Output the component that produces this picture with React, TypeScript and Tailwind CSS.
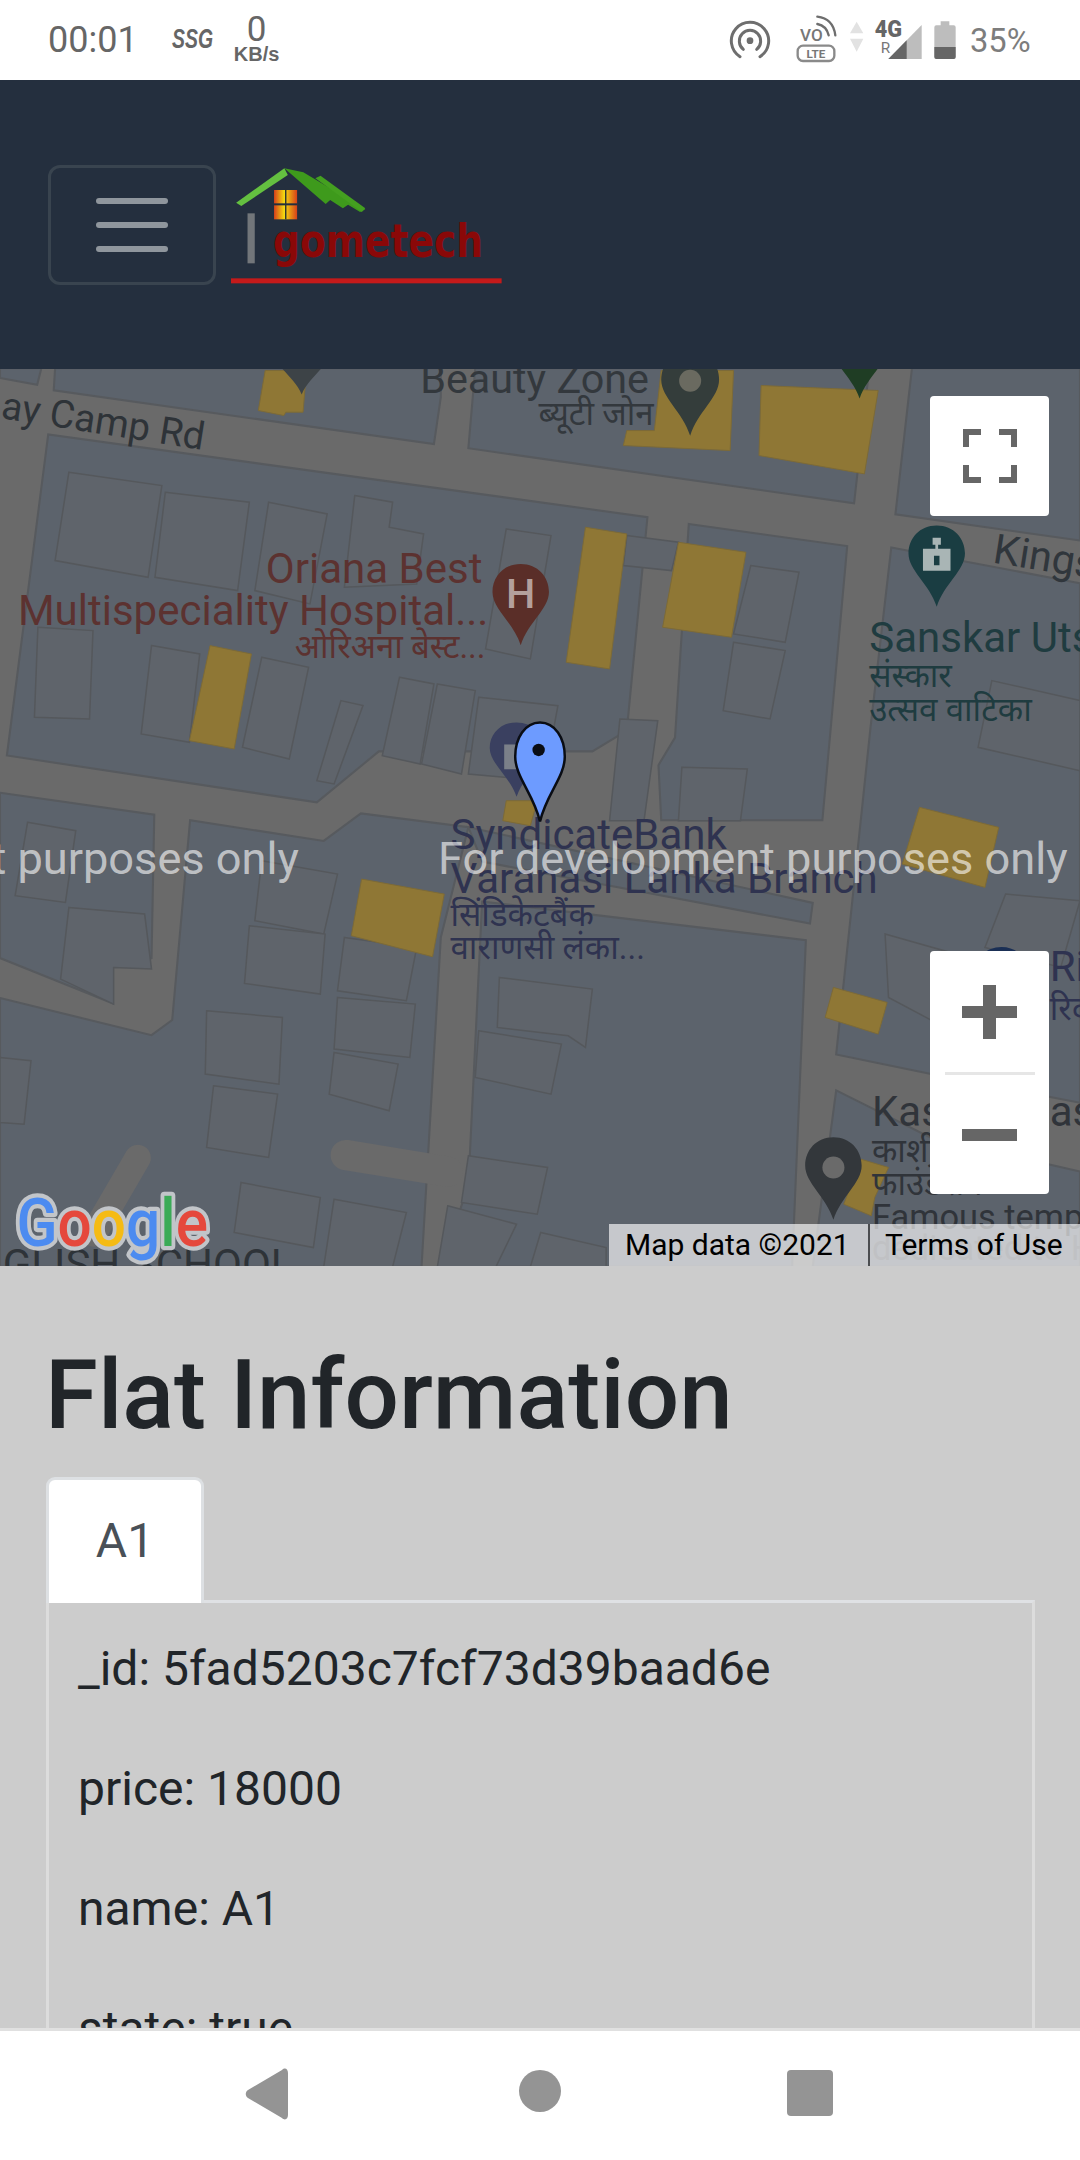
import React from 'react';

const FONT = { fontFamily: 'Roboto, "Noto Sans", sans-serif' };

// block outlines in the coordinates of the 784 wide picture
const blocks = [
  '40,267 39,283 315,322 320,288 320,267',
  '345,267 340,325 620,365 631,267',
  '662,267 650,373 784,392 784,267',
  '0,267 30,267 27,279 0,274',
  '35,315 5,548 230,582 275,545 430,545 455,530 470,375',
  '500,380 615,396 597,595 480,595 478,555 490,535',
  '647,397 784,423 784,800 675,779 607,765 632,527',
  '0,575 112,591 110,695 82,700 82,728 0,695',
  '0,724 110,751 125,740 138,595 235,610 262,590 340,600 320,680 306,919 0,919',
  '350,654 585,682 575,919 320,919 340,860',
  '607,791 675,825 784,850 784,919 590,919',
  '340,600 590,655 588,670 350,625',
];

const buildingsTop = [
  '100,305 235,345 215,620 80,570',
  '240,365 362,395 345,660 225,620',
  '390,395 475,430 450,700 370,660',
  '515,375 570,395 565,470 615,490 605,640 500,650',
  '735,475 800,495 770,865 705,835',
  '910,495 985,515 975,600 905,585',
  '1090,585 1160,605 1140,815 1065,790',
  '1065,815 1140,840 1118,1045 1050,1020',
  '55,770 135,780 130,1045 50,1040',
  '220,825 290,850 275,1115 205,1090',
  '380,860 448,890 420,1165 352,1130',
  '495,990 527,1005 485,1240 460,1230',
  '580,920 630,940 610,1180 555,1155',
  '635,940 690,960 670,1210 612,1180',
  '695,980 810,1005 790,1230 680,1210',
  '900,1045 955,1050 935,1350 885,1350',
  '990,1190 1085,1195 1075,1350 985,1350',
  '1440,930 1568,990 1568,1200 1420,1130',
];

const buildingsBottom = [
  '40,65 110,90 95,305 22,285',
  '100,320 210,340 220,505 165,500 165,610 88,535',
  '380,180 490,220 470,400 370,360',
  '362,375 472,400 465,580 355,548',
  '500,410 605,440 590,600 490,570',
  '490,590 603,610 595,770 485,745',
  '485,755 578,790 565,930 478,880',
  '300,630 410,650 405,850 298,820',
  '310,855 403,880 390,1070 300,1040',
  '0,770 45,780 35,970 0,965',
  '350,1145 465,1190 455,1340 340,1295',
  '485,1195 590,1235 570,1398 470,1398',
  '680,1065 795,1100 780,1240 670,1205',
  '725,530 860,565 850,740 825,705 722,680',
  '695,690 815,730 800,880 690,830',
  '650,1215 750,1270 720,1398 635,1398',
  '785,1295 880,1340 880,1398 770,1398',
  '1285,400 1405,470 1390,700 1290,590',
  '1460,280 1568,300 1540,500 1430,440',
];

const yellowTop = [
  '385,0 445,0 440,125 415,125 412,135 375,120',
  '960,0 1065,0 1060,240 905,225 910,180 950,180',
  '1105,45 1275,60 1255,310 1102,255',
  '850,470 910,490 885,895 822,875',
  '985,515 1083,545 1062,800 962,770',
  '305,825 365,850 340,1135 275,1110',
];

const yellowBottom = [
  '735,0 780,0 770,75 730,60',
  '525,235 645,280 628,468 510,405',
  '1335,20 1450,80 1430,260 1310,190',
  '1210,560 1288,605 1275,700 1198,650',
  '1250,1075 1290,1100 1270,1190 1265,1245 1225,1210',
];

const labels: { x: number; y: number; text: string; size: number; color: string }[] = [
  { x: 305, y: 285, text: 'Beauty Zone', size: 30, color: '#33383d' },
  { x: 391, y: 308, text: 'ब्यूटी जोन', size: 24, color: '#33383d' },
  { x: 193, y: 423, text: 'Oriana Best', size: 30.5, color: '#5c3230' },
  { x: 13, y: 453, text: 'Multispeciality Hospital...', size: 30.5, color: '#5c3230' },
  { x: 214, y: 477, text: 'ओरिअना बेस्ट...', size: 24, color: '#5c3230' },
  { x: 631, y: 473, text: 'Sanskar Utsav', size: 30.5, color: '#1f3c40' },
  { x: 631, y: 498, text: 'संस्कार', size: 24, color: '#1f3c40' },
  { x: 631, y: 523, text: 'उत्सव वाटिका', size: 24, color: '#1f3c40' },
  { x: 327, y: 616, text: 'SyndicateBank', size: 30.5, color: '#2f3350' },
  { x: 327, y: 648, text: 'Varanasi Lanka Branch', size: 30.5, color: '#2f3350' },
  { x: 327, y: 672, text: 'सिंडिकेटबैंक', size: 24, color: '#2f3350' },
  { x: 327, y: 696, text: 'वाराणसी लंका...', size: 24, color: '#2f3350' },
  { x: 762, y: 712, text: 'Ric', size: 30.5, color: '#2f3350' },
  { x: 762, y: 740, text: 'रिद्', size: 24, color: '#2f3350' },
  { x: 633, y: 817, text: 'Kas', size: 30.5, color: '#30343a' },
  { x: 762, y: 817, text: 'as', size: 30.5, color: '#30343a' },
  { x: 633, y: 843, text: 'काशी', size: 24, color: '#30343a' },
  { x: 633, y: 867, text: 'फाउंडेशन', size: 24, color: '#30343a' },
  { x: 633, y: 892, text: 'Famous temple', size: 25, color: '#30343a' },
  { x: 633, y: 914, text: 'dedicated to H', size: 25, color: '#4b4f55' },
];

const PIN_PATH = 'M0 0C.6 0 1 .45 1 1C1 1.6 .25 2.1 0 2.9C-.25 2.1 -1 1.6 -1 1C-1 .45 -.6 0 0 0Z';

const Pin = ({ cx, top, tip, w, color }: { cx: number; top: number; tip: number; w: number; color: string }) => (
  <path transform={`translate(${cx} ${top}) scale(${w / 2} ${(tip - top) / 2.9})`} d={PIN_PATH} fill={color} />
);

function MapDrawing() {
  return (
    <svg viewBox="0 267.5 784 651" preserveAspectRatio="none" className="block w-full h-full" style={FONT}>
      <rect x="0" y="267" width="784" height="652" fill="#6a6a6a" />
      <g fill="#5c636c" stroke="#575a5e" strokeWidth="1.5">
        {blocks.map(b => (
          <polygon key={b} points={b} />
        ))}
      </g>
      <g transform="translate(0 268.6) scale(.5 .242)">
        {buildingsTop.map(b => (
          <polygon key={b} points={b} fill="#5f646b" stroke="#55585c" strokeWidth="1.5" vectorEffect="non-scaling-stroke" />
        ))}
        {yellowTop.map(b => (
          <polygon key={b} points={b} fill="#8f7735" stroke="#7c6a38" strokeWidth="1" vectorEffect="non-scaling-stroke" />
        ))}
      </g>
      <g transform="translate(0 580.8) scale(.5 .242)">
        {buildingsBottom.map(b => (
          <polygon key={b} points={b} fill="#5f646b" stroke="#55585c" strokeWidth="1.5" vectorEffect="non-scaling-stroke" />
        ))}
        {yellowBottom.map(b => (
          <polygon key={b} points={b} fill="#8f7735" stroke="#7c6a38" strokeWidth="1" vectorEffect="non-scaling-stroke" />
        ))}
      </g>
      <g fill="none" stroke="#6a6a6a" strokeLinecap="round">
        <path d="M100 840L68 895" strokeWidth="19" />
        <path d="M251 838L325 850" strokeWidth="22" />
      </g>

      <text x="0" y="303" fontSize="28" fill="#2e3338" transform="rotate(9 0 303)">ay Camp Rd</text>
      <text x="720" y="408" fontSize="30" fill="#30363c" transform="rotate(9 720 408)">Kings</text>
      <text x="213" y="928" fontSize="30.5" fill="#2e3338" textAnchor="end">NGLISH SCHOOL</text>
      {labels.map(l => (
        <text key={l.text} x={l.x} y={l.y} fontSize={l.size} fill={l.color} fontFamily='Roboto, "Noto Sans", "Noto Sans Devanagari", "Lohit Devanagari", sans-serif'>
          {l.text}
        </text>
      ))}

      <Pin cx={219} top={240} tip={286} w={40} color="#3d4347" />
      <Pin cx={501} top={254} tip={316} w={42} color="#343d3b" />
      <circle cx={501} cy={276} r={8} fill="#6a6a60" />
      <Pin cx={624} top={235} tip={289} w={38} color="#1f3d24" />

      <Pin cx={378} top={409} tip={468} w={41} color="#5a2e28" />
      <text x={378} y={441} fontSize="30" fontWeight="500" fill="#b4a09c" textAnchor="middle">H</text>

      <Pin cx={680} top={381} tip={440} w={41} color="#1a3d42" />
      <path d="M677 390h6v5h-2v3h9v16h-20v-16h9v-3h-2zM678 403h4v7h-4z" fill="#a9b5b5" fillRule="evenodd" />

      <Pin cx={727} top={687} tip={740} w={38} color="#1a2f55" />
      <Pin cx={375} top={524} tip={578} w={39} color="#3a4060" />
      <rect x="366" y="540" width="10" height="18" fill="#7b8089" />
      <Pin cx={392} top={524} tip={596} w={36} color="#6d9bff" />
      <path
        transform="translate(392 524) scale(18 24.8)"
        d={PIN_PATH}
        fill="none"
        stroke="#0a0d14"
        strokeWidth="2.5"
        vectorEffect="non-scaling-stroke"
      />
      <circle cx={391} cy={544} r={4.5} fill="#0a0d14" />

      <Pin cx={605} top={825} tip={885} w={41} color="#33373b" />
      <circle cx={605} cy={847} r={8} fill="#6a6a6a" />

      <text x="318" y="634" fontSize="32.8" fill="#ffffff" fillOpacity=".62">For development purposes only</text>
      <text x="217" y="634" fontSize="32.8" fill="#ffffff" fillOpacity=".62" textAnchor="end">For development purposes only</text>

      <text
        x="12"
        y="904"
        fontSize="48"
        fontWeight="500"
        textLength="139"
        lengthAdjust="spacingAndGlyphs"
        stroke="#c2c5c9"
        strokeWidth="6"
        paintOrder="stroke"
        strokeLinejoin="round"
      >
        <tspan fill="#4c8bf0">G</tspan>
        <tspan fill="#e5483c">o</tspan>
        <tspan fill="#f5bb14">o</tspan>
        <tspan fill="#4c8bf0">g</tspan>
        <tspan fill="#3bab57">l</tspan>
        <tspan fill="#e5483c">e</tspan>
      </text>
    </svg>
  );
}

function StatusBar() {
  return (
    <div className="h-[80px] bg-white flex items-center justify-between text-[#666666] pl-[48px] pr-[49px]" style={FONT}>
      <div className="flex items-center">
        <span className="text-[36px] leading-none">00:01</span>
        <span className="ml-[34px] w-[44px] text-[27px] font-bold italic leading-none origin-left scale-x-[.72] -translate-y-px" style={{ fontFamily: '"Liberation Sans", sans-serif' }}>
          SSG
        </span>
        <div className="ml-[17px] w-[48px] flex flex-col items-center -mt-[2px]">
          <span className="text-[35px] leading-[30px]">0</span>
          <span className="text-[20px] font-bold leading-[18px]" style={{ fontFamily: '"Liberation Sans", sans-serif' }}>KB/s</span>
        </div>
      </div>
      <StatusIcons />
    </div>
  );
}

function StatusIcons() {
  return (
    <svg width="320" height="80" viewBox="120 0 960 240" className="block -mr-[9px]" style={FONT}>
      <g fill="none" stroke="#6e6e6e" strokeLinecap="round" strokeWidth="9">
        <path d="M180 170A56 56 0 1 1 240 170" />
        <path d="M190 148A32 32 0 1 1 230 148" />
      </g>
      <circle cx="210" cy="122" r="10" fill="#6e6e6e" />
      <text x="360" y="122" fontSize="52" fontWeight="500" fill="#777777" textLength="68" lengthAdjust="spacingAndGlyphs">VO</text>
      <g fill="none" stroke="#6e6e6e" strokeWidth="7" strokeLinecap="round">
        <path d="M412 72C432 76 442 88 446 106" />
        <path d="M412 50C446 54 462 74 466 106" />
        <rect x="353" y="137" width="110" height="46" rx="16" stroke="#8a8a8a" />
      </g>
      <text x="408" y="174" fontSize="35" fontWeight="700" fill="#777777" textAnchor="middle">LTE</text>
      <polygon points="530,65 550,100 510,100" fill="#e2e2e2" />
      <polygon points="510,116 550,116 530,155" fill="#e2e2e2" />
      <text x="584" y="110" fontSize="70" fontWeight="900" fill="#666666" textLength="82" lengthAdjust="spacingAndGlyphs">4G</text>
      <text x="602" y="158" fontSize="46" fill="#777777">R</text>
      <polygon points="625,177 725,75 725,177" fill="#bdbdbd" />
      <polygon points="625,177 680,121 680,177" fill="#666666" />
      <path d="M782 76v-12h26v12h13a6 6 0 0 1 6 6v89a6 6 0 0 1-6 6h-52a6 6 0 0 1-6-6v-89a6 6 0 0 1 6-6z" fill="#bdbdbd" />
      <path d="M763 141h64v30a6 6 0 0 1-6 6h-52a6 6 0 0 1-6-6z" fill="#666666" />
      <text x="870" y="156" fontSize="98" fill="#7d7d7d">35%</text>
    </svg>
  );
}

function Logo() {
  return (
    <svg width="272" height="120" viewBox="670 495 790 360" preserveAspectRatio="none" className="block">
      <polygon points="685,608 825,505 835,525 700,618" fill="#64c040" />
      <polygon points="825,505 880,517 1060,628 1045,636 1010,614 995,625 958,600 945,612" fill="#3e9a1c" />
      <polygon points="915,535 930,527 1060,625 1050,636" fill="#44a020" />
      <defs>
        <linearGradient id="logoWindow">
          <stop offset="0" stopColor="#d8401a" />
          <stop offset=".45" stopColor="#f4dc10" />
          <stop offset="1" stopColor="#d8401a" />
        </linearGradient>
      </defs>
      <rect x="795" y="570" width="67" height="88" fill="url(#logoWindow)" />
      <rect x="827" y="570" width="4" height="88" fill="#2a2f2e" />
      <rect x="795" y="610" width="67" height="6" fill="#242f3e" />
      <rect x="718" y="640" width="21" height="150" fill="#72767a" />
      <text
        x="792"
        y="770"
        fontSize="140"
        fontWeight="700"
        fill="#8a0808"
        textLength="610"
        lengthAdjust="spacingAndGlyphs"
        fontFamily='"DejaVu Sans", sans-serif'
      >
        gometech
      </text>
      <rect x="670" y="835" width="786" height="15" fill="#c41a1a" />
    </svg>
  );
}

function Navbar() {
  return (
    <nav className="h-[289px] bg-[#242f3e] flex items-center pl-[48px]">
      <button className="w-[168px] h-[120px] border-[3px] border-[#39444f] rounded-[12px] flex flex-col items-center justify-center gap-[18px]">
        <span className="block w-[72px] h-[6px] rounded-full bg-[#8f969d]" />
        <span className="block w-[72px] h-[6px] rounded-full bg-[#8f969d]" />
        <span className="block w-[72px] h-[6px] rounded-full bg-[#8f969d]" />
      </button>
      <div className="ml-[15px]">
        <Logo />
      </div>
    </nav>
  );
}

function MapControls() {
  return (
    <>
      <div className="absolute left-[930px] top-[27px] w-[119px] h-[120px] bg-white rounded-[4px] flex items-center justify-center">
        <svg width="54" height="54" viewBox="0 0 54 54" fill="#666666">
          <path d="M0 0h18v6H6v12H0zM36 0h18v18h-6V6H36zM0 36h6v12h12v6H0zM48 36h6v18H36v-6h12z" />
        </svg>
      </div>
      <div className="absolute left-[930px] top-[582px] w-[119px] h-[243px] bg-white rounded-[4px] flex flex-col items-center">
        <div className="h-[121px] flex items-center justify-center">
          <svg width="55" height="54" viewBox="0 0 55 54" fill="#666666">
            <path d="M21 0h13v21h21v12H34v21H21V33H0V21h21z" />
          </svg>
        </div>
        <div className="w-[90px] h-[3px] bg-[#e6e6e6]" />
        <div className="flex-1 flex items-center justify-center">
          <div className="w-[55px] h-[12px] bg-[#666666]" />
        </div>
      </div>
      <div className="absolute right-0 bottom-0 w-[471px] h-[42px] bg-white/65 flex items-center text-black text-[30px] leading-none" style={FONT}>
        <span className="ml-[16px]">Map data ©2021</span>
        <span className="absolute left-[259px] top-0 w-[2px] h-full bg-[#4b4d50]" />
        <span className="absolute left-[276px]">Terms of Use</span>
      </div>
    </>
  );
}

const rows = ['_id: 5fad5203c7fcf73d39baad6e', 'price: 18000', 'name: A1', 'state: true'];

export default function App() {
  return (
    <div className="w-[1080px] h-[2160px] overflow-hidden flex flex-col bg-[#cccccc]">
      <StatusBar />
      <Navbar />
      <div className="relative h-[897px] overflow-hidden">
        <MapDrawing />
        <MapControls />
      </div>
      <main className="flex-1 min-h-0 overflow-hidden bg-[#cccccc] pt-[75px] pl-[46px] pr-[45px] text-[#212529]" style={FONT}>
        <h1 className="text-[96px] font-medium leading-[108px] -ml-[1px]">Flat Information</h1>
        <div className="flex mt-[28px] relative z-10">
          <div className="w-[158px] h-[126px] bg-white border-[3px] border-b-0 border-[#dde0e3] rounded-t-[9px] flex items-center justify-center text-[48px] text-[#495057] pb-[2px]">
            A1
          </div>
        </div>
        <div className="-mt-[3px] border-[3px] border-[#dcdcdc] border-t-[#dfe1e4] h-[600px] pt-[39px] pl-[29px]">
          {rows.map(row => (
            <p key={row} className="text-[48px] leading-[54px] mb-[66px]">
              {row}
            </p>
          ))}
        </div>
      </main>
      <footer className="h-[132px] bg-white border-t-[3px] border-[#e0e0e0] flex items-center relative">
        <svg width="1080" height="129" viewBox="0 0 1080 129" className="block">
          <path d="M282 39C285 36 288 38 288 42V84C288 88 285 90 282 87L248 67C245 65 245 61 248 59Z" fill="#949494" />
          <circle cx="540" cy="60" r="21" fill="#949494" />
          <rect x="787" y="39" width="46" height="46" rx="4" fill="#949494" />
        </svg>
      </footer>
    </div>
  );
}
